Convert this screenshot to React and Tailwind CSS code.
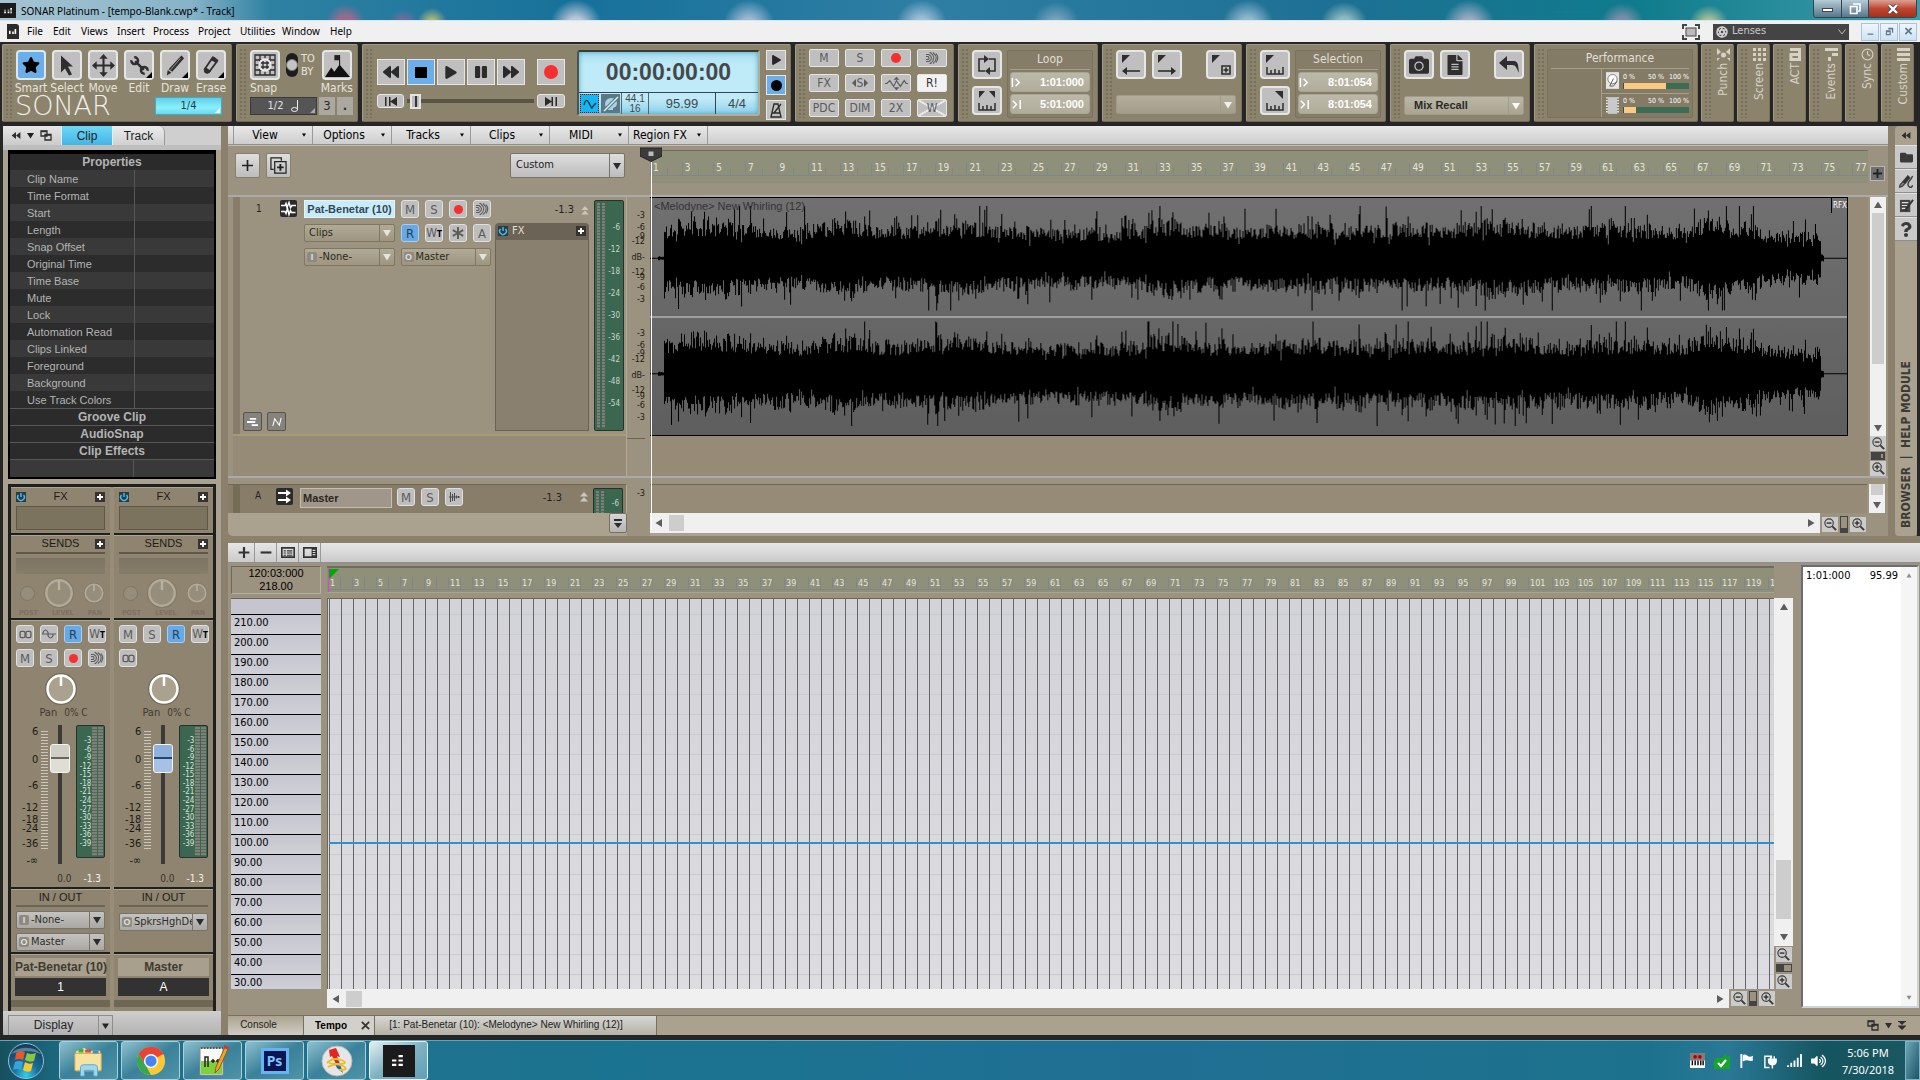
import React from "react";
import {
  FaStar, FaWrench, FaPencilAlt, FaCamera, FaFileAlt, FaFolder, FaQuestion,
  FaBackward, FaForward, FaPlay, FaPause, FaFlag, FaVolumeUp, FaAsterisk,
} from "react-icons/fa";
import { Aperture, Clock } from "lucide-react";

/* ---------- small shared pieces ---------- */

const Down = ({ className = "w-2 h-2" }) => (
  <svg viewBox="0 0 8 8" className={className} fill="currentColor" aria-hidden="true"><path d="M0 1h8L4 7.5z" /></svg>
);

function Select({ label, value, badge, className = "", arrow = "text-[#2c2c2c]", line = "border-[#77736a]" }) {
  return (
    <label className={`flex items-stretch overflow-hidden rounded-[2px] border ${line} ${className}`}>
      {badge && (
        <span className="my-auto ml-[2px] flex h-[10px] w-[10px] shrink-0 items-center justify-center rounded-[2px] bg-[#8d8a82] font-['Liberation_Sans',sans-serif] text-[9px] leading-none font-bold text-[#e4e2dc]">{badge}</span>
      )}
      <select aria-label={label} className={`min-w-0 flex-1 appearance-none overflow-hidden bg-transparent outline-none ${badge ? "pl-[2px]" : "pl-[4px]"}`}>
        <option>{value}</option>
      </select>
      <span className={`flex w-[15px] shrink-0 items-center justify-center border-l ${line} ${arrow}`}><Down className="h-[8px] w-[8px]" /></span>
    </label>
  );
}

const Sq = ({ label, on, children }) => (
  <button aria-label={label} className={`flex h-[18px] w-[18px] shrink-0 items-center justify-center rounded-[3px] border text-[13px] leading-none ${on ? "border-[#a9cdf2] bg-[#65a9e6] text-[#2b3e52]" : "border-[#e0e0e0] bg-[#bebebe] text-[#5c5c5c]"}`}>
    {children}
  </button>
);

const Dot = ({ className = "h-[9px] w-[9px]" }) => <span className={`rounded-full bg-[#f82f2f] ${className}`} />;

const Echo = () => (
  <svg viewBox="0 0 14 14" className="h-[14px] w-[14px]" fill="none" stroke="currentColor" strokeWidth="1.1">
    <path d="M1 5.500h2q2 1.500 0 3H1M1 3.500h3q5 3.500 0 7H1M4.500 1.500h1q6.500 5.500 0 11h-1M8 1.500q6.500 5.500 0 11M11 2.500q3.500 4.500 0 9" />
  </svg>
);
const Interleave = () => (
  <svg viewBox="0 0 14 10" className="h-[9px] w-[13px]" fill="none" stroke="currentColor" strokeWidth="1.500">
    <rect x="1" y="1.500" width="5.500" height="7" rx="1.500" /><rect x="7.500" y="1.500" width="5.500" height="7" rx="1.500" />
  </svg>
);
const Phase = () => (
  <svg viewBox="0 0 14 12" className="h-[12px] w-[14px]" fill="none" stroke="currentColor" strokeWidth="1.200">
    <path d="M0 6h14M1 6V4.500q2.500-5 5 0v3q2.500 5 5 0V6" />
  </svg>
);
const WriteT = () => (
  <span className="flex items-end text-[12px] leading-none">W<span className="text-[8px] leading-[9px] font-bold text-black">T</span></span>
);
const PlusBox = () => (
  <button aria-label="Add" className="flex h-[10px] w-[10px] items-center justify-center bg-[#35332f] text-white">
    <svg viewBox="0 0 10 10" className="h-[10px] w-[10px]" stroke="currentColor" strokeWidth="1.800"><path d="M5 2v6M2 5h6" /></svg>
  </button>
);
const Power = () => (
  <button aria-label="FX power" className="flex h-[10px] w-[10px] items-center justify-center bg-[#2c3a42] text-[#3fc0f0]">
    <svg viewBox="0 0 10 10" className="h-[10px] w-[10px]" fill="none" stroke="currentColor" strokeWidth="1.500"><path d="M2.500 3a3.300 3.300 0 1 0 5 0M5 1v4" /></svg>
  </button>
);
const Zoom = ({ plus }) => (
  <button aria-label={plus ? "Zoom in" : "Zoom out"} className="flex h-[15px] w-[16px] shrink-0 items-center justify-center bg-[#cbcbcb] text-[#3a3a3a]">
    <svg viewBox="0 0 16 16" className="h-[15px] w-[15px]" fill="none" stroke="currentColor">
      <circle cx="6.500" cy="6.500" r="4.500" strokeWidth="1.200" /><path d="M10 10l4 4" strokeWidth="2" /><path d={plus ? "M4 6.500h5M6.500 4v5" : "M4 6.500h5"} strokeWidth="1.600" />
    </svg>
  </button>
);
const Tri = ({ d, className = "h-[8px] w-[8px]" }) => (
  <svg viewBox="0 0 8 8" className={className} fill="#5d5d5d" aria-hidden="true"><path d={d} /></svg>
);
const UP = "M0 7L4 0.500 8 7z", DN = "M0 1h8L4 7.500z", LT = "M7 0v8L0.500 4z", RT = "M1 0v8l6.500-4z";

const Cascade = () => (
  <svg viewBox="0 0 12 11" className="h-[11px] w-[12px]" fill="none" stroke="#2e2e2e" strokeWidth="1.300"><path d="M1 1h6v5H1zM5 4.500h6v5.500H5z" /><path d="M1 1.500h6M5 5h6" /></svg>
);

/* ---------- title bar and menu ---------- */

function TitleBar() {
  return (
    <header className="flex h-[21px] items-center justify-between border-b border-[#d7e6ee] bg-[radial-gradient(circle_at_18%_120%,#b0688acc_0_8px,transparent_20px),radial-gradient(circle_at_21%_120%,#8a6a98aa_0_6px,transparent_15px),radial-gradient(circle_at_22.500%_115%,#c9c470cc_0_4px,transparent_15px),radial-gradient(circle_at_30%_130%,#e6dceacc_0_8px,transparent_26px),radial-gradient(circle_at_39%_130%,#d8d8ecaa_0_8px,transparent_26px),radial-gradient(circle_at_48%_130%,#d4dff0aa_0_8px,transparent_26px),radial-gradient(circle_at_55%_130%,#c3ccd888_0_6px,transparent_24px),radial-gradient(circle_at_65%_130%,#c9dcecaa_0_8px,transparent_26px),radial-gradient(circle_at_70%_130%,#c9e0d8aa_0_8px,transparent_24px),radial-gradient(circle_at_76.500%_130%,#c9bfd4bb_0_8px,transparent_26px),radial-gradient(ellipse_at_82%_60%,#7fa8c888_0_10px,transparent_70px),radial-gradient(circle_at_84.500%_125%,#a998b8aa_0_8px,transparent_22px),radial-gradient(circle_at_89%_125%,#c9cf9acc_0_6px,transparent_20px),linear-gradient(to_right,#a6c4d2,#86b3c8_10%,#2f81a2_14%,#16719a_30%,#2f7ea4_48%,#1d7094_70%,#0f7b8c_85%,#3f9cab)]">
      <div className="flex items-center gap-[5px]">
        <span className="flex h-[15px] w-[16px] items-center justify-center bg-[#1b1b1b] text-white"><svg viewBox="0 0 10 8" className="h-[7px] w-[9px]" fill="currentColor"><path d="M0 3h2v1H0zM0 5h2v2H0zM4 3h2v1H4zM4 5h2v2H4zM7 1h2v2H7zM7 4h2v1H7zM7 6h2v1H7z" /></svg></span>
        <h1 className="pt-[2px] font-['Noto_Sans',sans-serif] text-[10px] text-black">SONAR Platinum - [tempo-Blank.cwp* - Track]</h1>
      </div>
      <div className="mr-[3px] flex h-[18px] self-start overflow-hidden rounded-b-[4px] border border-t-0 border-[#33454f]">
        <button aria-label="Minimize" className="flex w-[28px] items-end justify-center border-r border-[#33454f] bg-linear-to-b from-[#b6cbd6] to-[#56788c] pb-[5px]"><span className="h-[4px] w-[11px] border border-[#444] bg-white" /></button>
        <button aria-label="Restore" className="flex w-[27px] items-center justify-center border-r border-[#33454f] bg-linear-to-b from-[#b6cbd6] to-[#56788c]"><svg viewBox="0 0 12 12" className="h-[12px] w-[12px]" fill="none" stroke="#fff" strokeWidth="1.600"><path d="M4 1h7v7H9M1.500 3.500h6.500v7H1.500z" /></svg></button>
        <button aria-label="Close" className="flex w-[47px] items-center justify-center bg-linear-to-b from-[#dca095] via-[#bf4630] to-[#a42f1c]"><svg viewBox="0 0 12 10" className="h-[10px] w-[12px]"><path d="M2 1l8 8M10 1L2 9" stroke="#4a4a52" strokeWidth="4" /><path d="M2 1l8 8M10 1L2 9" stroke="#fff" strokeWidth="2.400" /></svg></button>
      </div>
    </header>
  );
}

const MENU = [["File", "w-[26px]"], ["Edit", "w-[28px]"], ["Views", "w-[36px]"], ["Insert", "w-[36px]"], ["Process", "w-[45px]"], ["Project", "w-[42px]"], ["Utilities", "w-[42px]"], ["Window", "w-[48px]"], ["Help", "w-[30px]"]];

function MenuBar() {
  return (
    <nav className="flex h-[21px] items-center bg-[#f0f0f0] pr-[2px] pl-[7px] font-['Noto_Sans',sans-serif] text-[10px] text-black">
      <span className="mr-[8px] flex h-[15px] w-[12px] items-center justify-center rounded-tr-[3px] bg-[#2b2b2b] text-white"><svg viewBox="0 0 10 8" className="h-[7px] w-[8px]" fill="currentColor"><path d="M0 3h2v4H0zM4 4h2v3H4zM7 1h2v6H7z" /></svg></span>
      {MENU.map(([m, w]) => <button key={m} className={`${w} text-left`}>{m}</button>)}
      <div className="ml-auto flex items-center">
        <svg viewBox="0 0 18 16" className="mr-[13px] h-[16px] w-[18px]" fill="none" stroke="#444" strokeWidth="2"><path d="M1 5V1h4M13 1h4v4M17 11v4h-4M5 15H1v-4" /><rect x="4" y="4" width="10" height="8" fill="#bbb" strokeWidth="1" /></svg>
        <label className="mr-[12px] flex h-[16px] w-[136px] items-center bg-[#444] px-[3px] text-[#c9c9c9]">
          <Aperture className="h-[12px] w-[12px] text-[#d6d6d6]" strokeWidth={3} />
          <select aria-label="Lenses" className="ml-[4px] flex-1 appearance-none bg-transparent font-['DejaVu_Sans_Condensed',sans-serif] text-[11px] outline-none"><option>Lenses</option></select>
          <svg viewBox="0 0 8 6" className="h-[6px] w-[8px]" fill="none" stroke="#bbb"><path d="M0.500 0.500L4 5 7.500 0.500" /></svg>
        </label>
        {[["Minimize document", "M2 8h7v1.500H2z"], ["Restore document", "M4 1h6v6H8.500V3H4zM1 4h6v6H1zM2.500 6.500v2h3v-2z"], ["Close document", "M1 2l1.500-1.500L5.500 3.500 8.500.500 10 2 7 5l3 3-1.500 1.500-3-3-3 3L1 8l3-3z"]].map(([l, d]) => (
          <button key={l} aria-label={l} className="mr-[1px] flex h-[18px] w-[18px] items-center justify-center border border-[#a9c3dc] bg-linear-to-b from-[#eff6fc] to-[#cfe2f3]">
            <svg viewBox="0 0 11 11" className="h-[9px] w-[9px]" fill="#5f7890" fillRule="evenodd"><path d={d} /></svg>
          </button>
        ))}
      </div>
    </nav>
  );
}

/* ---------- control bar ---------- */

const Module = ({ className, children }) => (
  <section className={`flex h-[78px] shrink-0 rounded-[2px] border border-t-[#a39b86] border-r-[#7a725f] border-b-[#736b58] border-l-[#a39b86] bg-[#8c836d] ${className}`}>
    <div className="my-[3px] ml-[2px] w-[8px] shrink-0 bg-[radial-gradient(circle_at_2px_2px,#776f5c_1px,transparent_1px)] bg-[size:4px_4px]" />
    {children}
  </section>
);
const Big = ({ label, on, corner, children, h = "h-[30px]" }) => (
  <button aria-label={label} className={`relative flex ${h} w-[30px] shrink-0 items-center justify-center rounded-[4px] border-2 ${on ? "border-[#dce9f5] bg-[#6aaeea]" : "border-[#e6e6e6] bg-[#bfbfbf]"} text-[#2e2e2e]`}>
    {children}
    {corner && <svg viewBox="0 0 6 6" className="absolute right-0 bottom-0 h-[6px] w-[6px]"><path d="M6 0v6H0z" fill="#000" /></svg>}
  </button>
);
const TOOLS = [
  ["Smart", <FaStar className="h-[18px] w-[18px] text-black" />],
  ["Select", <svg viewBox="0 0 16 20" className="h-[21px] w-[16px]" fill="currentColor"><path d="M2 0l12 11H9l4 8-3 1-4-7-4 4z" /></svg>],
  ["Move", <svg viewBox="0 0 22 22" className="h-[23px] w-[23px]" fill="currentColor"><path d="M11 0l4 4.500h-3V10h5.500V7l4.500 4-4.500 4v-3H12v5.500h3L11 22l-4-4.500h3V12H4.500v3L0 11l4.500-4v3H10V4.500H7z" /></svg>],
  ["Edit", <svg viewBox="0 0 22 22" className="h-[21px] w-[21px]" fill="none" stroke="currentColor"><path d="M6.500 6.500l9 9" strokeWidth="2.600" /><path d="M2.500 5.500a3.500 3.500 0 1 0 3-3M19.500 16.500a3.500 3.500 0 1 0-3 3" strokeWidth="2.600" /></svg>],
  ["Draw", <svg viewBox="0 0 22 24" className="h-[23px] w-[20px]"><path d="M18 1l3 3L8 19l-4-3z" fill="currentColor" /><path d="M17 4L6 17" stroke="#999" /><path d="M3 17l4 3-5 3z" fill="currentColor" /></svg>],
  ["Erase", <svg viewBox="0 0 20 22" className="h-[21px] w-[18px]"><path d="M12 2l5 4L8 18l-5-3z" fill="none" stroke="currentColor" strokeWidth="2" /><path d="M4 13l6 4-3 3q-4 1-5-3z" fill="currentColor" /><path d="M13 1l5 4-3 3-5-3z" fill="currentColor" /></svg>],
];

const TB = "flex h-[26px] w-[28px] items-center justify-center border border-[#e6e6e6] text-[#2b2b2b]";

function Transport() {
  return (
    <Module className="w-[429px]">
      <div className="ml-[4px] w-[190px] pt-[14px]">
        <div className="flex gap-[2px]">
          <button aria-label="Rewind" className={`${TB} bg-[#bfbfbf]`}><FaBackward className="h-[16px] w-[18px]" /></button>
          <button aria-label="Stop" className={`${TB} bg-[#6aaeea]`}><span className="h-[11px] w-[12px] bg-black" /></button>
          <button aria-label="Play" className={`${TB} bg-[#bfbfbf]`}><FaPlay className="h-[13px] w-[12px]" /></button>
          <button aria-label="Pause" className={`${TB} bg-[#bfbfbf]`}><FaPause className="h-[14px] w-[12px]" /></button>
          <button aria-label="Fast forward" className={`${TB} bg-[#bfbfbf]`}><FaForward className="h-[16px] w-[18px]" /></button>
          <button aria-label="Record" className={`${TB} ml-[10px] bg-[#bfbfbf]`}><Dot className="h-[14px] w-[14px]" /></button>
        </div>
        <div className="mt-[9px] flex h-[14px] items-center">
          <button aria-label="Go to start" className="flex h-[14px] w-[27px] items-center justify-center rounded-[3px] border border-[#e6e6e6] bg-[#bfbfbf]"><svg viewBox="0 0 12 9" className="h-[9px] w-[12px]"><path d="M0 0h1.500v9H0zM4 0h1.500v9H4zM12 0v9L5 4.500z" fill="#2b2b2b" /></svg></button>
          <input type="range" aria-label="Position" defaultValue="3" className="mx-[3px] h-[14px] w-[127px] appearance-none bg-[linear-gradient(#5a5447,#5a5447)] bg-[size:100%_4px] bg-center bg-no-repeat [&::-webkit-slider-thumb]:h-[15px] [&::-webkit-slider-thumb]:w-[11px] [&::-webkit-slider-thumb]:appearance-none [&::-webkit-slider-thumb]:border-2 [&::-webkit-slider-thumb]:border-[#e4e4e4] [&::-webkit-slider-thumb]:bg-[linear-gradient(to_right,#bbb_3px,#333_3px_5px,#bbb_5px)]" />
          <button aria-label="Go to end" className="flex h-[14px] w-[28px] items-center justify-center rounded-[3px] border border-[#e6e6e6] bg-[#bfbfbf]"><svg viewBox="0 0 12 9" className="h-[9px] w-[12px]"><path d="M12 0h-1.500v9H12zM8 0H6.500v9H8zM0 0v9l7-4.500z" fill="#2b2b2b" /></svg></button>
        </div>
      </div>
      <div className="mt-[5px] ml-[10px] flex h-[66px] w-[183px] flex-col rounded-[3px] border-2 border-t-[#3c3a33] border-r-[#b5ad98] border-b-[#b5ad98] border-l-[#55524a] bg-[linear-gradient(#a9ddef,#bfeaf7_20%,#bfeaf7_75%,#8fd2ea)] font-['Liberation_Sans',sans-serif] text-[#45484b] shadow-[inset_0_0_5px_#3fa9cc]">
        <div className="flex h-[41px] items-center justify-center border-b border-[#345] text-[23px] font-bold">00:00:00:00</div>
        <div className="flex flex-1 items-stretch text-[13px]">
          <button aria-label="Audio engine" className="m-[1px] flex w-[19px] items-center justify-center border border-dotted border-[#0b2a35] bg-[#16b6f0]"><svg viewBox="0 0 14 12" className="h-[12px] w-[14px]" fill="none" stroke="#04303f" strokeWidth="1.300"><path d="M1 7q2-8 5-2t3 5 4-5" /></svg></button>
          <button aria-label="Panic" className="m-[1px] flex w-[19px] items-center justify-center bg-[#5a7886]"><svg viewBox="0 0 16 16" className="h-[16px] w-[16px]"><path d="M8 2a6 6 0 0 0-6 6q0 3 2 4v2h6v-2q4-1 4-5a6 6 0 0 0-6-5z" fill="#a9d3e2" /><path d="M1 15L15 1" stroke="#5a7886" strokeWidth="3.500" /><path d="M1 15L15 1" stroke="#d6f1f9" strokeWidth="1.500" /></svg></button>
          <span className="flex w-[28px] flex-col items-center justify-center border-x border-[#567] text-[10px] leading-[10px]"><span>44.1</span><span>16</span></span>
          <span className="flex flex-1 items-center justify-center border-r border-[#345]">95.99</span>
          <span className="flex w-[42px] items-center justify-center">4/4</span>
        </div>
      </div>
      <div className="ml-[6px] flex flex-col gap-[5px] pt-[5px]">
        <button aria-label="Play mode" className="flex h-[20px] w-[20px] items-center justify-center border border-[#e6e6e6] bg-[#bfbfbf]"><FaPlay className="h-[10px] w-[9px]" /></button>
        <button aria-label="Record mode" className="flex h-[20px] w-[20px] items-center justify-center border border-[#e6e6e6] bg-[#6aaeea]"><span className="h-[11px] w-[11px] rounded-full bg-black" /></button>
        <button aria-label="Metronome" className="flex h-[20px] w-[20px] items-center justify-center border border-[#e6e6e6] bg-[#bfbfbf]"><svg viewBox="0 0 14 16" className="h-[16px] w-[14px]" fill="none" stroke="#2b2b2b" strokeWidth="1.300"><path d="M2 15L5 2h4l3 13zM5 11l7-9M3 11h8" /></svg></button>
      </div>
    </Module>
  );
}

const MIX = [
  "M", "S", <Dot className="h-[10px] w-[10px]" />, <Echo />, "FX",
  <span className="flex items-center gap-[1px]"><svg viewBox="0 0 4 8" className="h-[8px] w-[4px]" fill="currentColor"><path d="M4 0v8L0 4z" /></svg>S<svg viewBox="0 0 4 8" className="h-[8px] w-[4px]" fill="currentColor"><path d="M0 0v8l4-4z" /></svg></span>,
  <svg viewBox="0 0 26 14" className="h-[15px] w-[25px]" fill="none" stroke="currentColor" strokeWidth="1.200"><path d="M1 7h2l3-3 4 6 3-6 4 6 4-6 2 3h2" /><path d="M13 0l3 3h-6zM13 14l3-3h-6z" fill="currentColor" stroke="none" /></svg>,
  "R!", "PDC", "DIM", "2X", "W",
];
const MIXN = ["Mute all", "Solo all", "Arm all", "Echo all", "FX bypass", "Exclusive solo", "Automation offset", "Read", "Delay compensation", "Dim solo", "Double sampling", "Write"];

const Range = ({ title, a, b, children }) => (
  <Module className="w-[140px]">
    <div className="ml-[3px] flex flex-col gap-[7px] pt-[5px]">{children}</div>
    <div className="mt-[5px] ml-[5px] flex h-[68px] w-[86px] flex-col items-stretch rounded-[2px] border border-[#7a725f] bg-[#867d68] px-[2px] text-center text-[12px] text-[#e2dfd6]">
      <h2 className="h-[19px] border-b border-[#a79f8b] leading-[17px]">{title}</h2>
      {[a, b].map((v, i) => (
        <label key={i} className="mt-[2px] flex h-[20px] items-center rounded-[3px] border border-[#a9a595] bg-linear-to-b from-[#bdb9a9] to-[#b1ad9b] pr-[5px]">
          <svg viewBox="0 0 12 12" className="h-[13px] w-[13px]" fill="none" stroke="#fff" strokeWidth="1.600"><path d={i ? "M2 2l4 4-4 4M10 1v10" : "M1.500 1v10M5 2l4 4-4 4"} /></svg>
          <input aria-label={`${title} ${i ? "end" : "start"}`} defaultValue={v} className="w-full min-w-0 bg-transparent text-right font-['Liberation_Sans',sans-serif] text-[11px] font-bold text-white outline-none" />
        </label>
      ))}
    </div>
  </Module>
);
const Comb = ({ top }) => (
  <svg viewBox="0 0 22 22" className="h-[22px] w-[22px]" fill="none" stroke="#2e2e2e" strokeWidth="1.500"><path d="M3 13v7h16v-7M7 16v4M11 15v5M15 16v4" /><path d={top} fill="#2e2e2e" stroke="none" /></svg>
);
const BigIcon = ({ d, f }) => (
  <svg viewBox="0 0 22 22" className="h-[22px] w-[22px]" fill="none" stroke="#2e2e2e" strokeWidth="1.600"><path d={d} />{f && <path d={f} fill="#2e2e2e" stroke="none" />}</svg>
);

const TABS = [
  ["Punch", <svg viewBox="0 0 13 13" className="h-[13px] w-[13px]" fill="currentColor"><path d="M0 0l4 4-4 3V0zM13 0L9 4l4 3zM0 13v-3h3zM13 13v-3h-3z" /><circle cx="6.500" cy="7" r="2.500" /></svg>],
  ["Screen", <svg viewBox="0 0 13 13" className="h-[13px] w-[13px]" fill="currentColor"><path d="M0 0h3v3H0zM5 0h3v3H5zM10 0h3v3h-3zM0 5h3v3H0zM5 5h3v3H5zM10 5h3v3h-3zM0 10h3v3H0zM5 10h3v3H5zM10 10h3v3h-3z" /></svg>],
  ["ACT", <svg viewBox="0 0 12 13" className="h-[13px] w-[12px]" fill="none" stroke="currentColor" strokeWidth="3"><path d="M1 1.500h9.500V13M10 6.500H2v5h8" /></svg>],
  ["Events", <svg viewBox="0 0 13 13" className="h-[13px] w-[13px]" fill="currentColor"><path d="M0 0h13v3H0zM3 9h3v4H3zM7 5h6v3H7z" /></svg>],
  ["Sync", <Clock className="h-[13px] w-[13px]" />],
  ["Custom", <svg viewBox="0 0 13 13" className="h-[13px] w-[13px]" fill="currentColor"><path d="M0 0h13v3H0zM0 5h13v3H0zM0 10h13v3H0z" /></svg>],
];

function ControlBar() {
  return (
    <div className="flex h-[84px] items-start gap-[4px] overflow-hidden bg-[#262626] px-[2px] pt-[2px] text-[#262626]">
      <Module className="w-[230px]">
        <div className="pt-[5px]">
          <div className="flex">
            {TOOLS.map(([n, icon], i) => (
              <div key={n} className="flex w-[36px] flex-col items-center text-[12px] leading-[16px] text-[#e6e3da]">
                <Big label={n} on={i === 0} corner={i > 2}>{icon}</Big>
                <span>{n}</span>
              </div>
            ))}
          </div>
          <div className="flex items-center justify-between pr-[7px] pl-[2px]">
            <span className="font-['DejaVu_Sans',sans-serif] text-[27px] leading-[20px] font-extralight text-[#f1efe9]">SONAR</span>
            <button className="relative h-[18px] w-[67px] border border-[#48a9c0] bg-[linear-gradient(#5ed0ea,#8ceefb_60%,#62dcf2)] text-[11px] text-[#1d3b44]">1/4<svg viewBox="0 0 6 6" className="absolute right-[1px] bottom-[1px] h-[5px] w-[5px]"><path d="M6 0v6H0z" fill="#fff" /></svg></button>
          </div>
        </div>
      </Module>
      <Module className="w-[122px]">
        <div className="ml-[3px] pt-[5px] text-[12px] text-[#e6e3da]">
          <div className="flex items-center">
            <Big label="Snap to grid"><svg viewBox="0 0 22 22" className="h-[22px] w-[22px]" fill="none" stroke="#2b2b2b" strokeWidth="1.300"><path d="M1 1h20v20H1zM6 1v20M16 1v20M1 6h20M1 16h20M1 11h4M17 11h4M11 1v4M11 17v4" /><circle cx="11" cy="11" r="6" fill="#d6d6d6" stroke="#f0f0f0" /><path d="M9 7v8M13 7v8M7 9h8M7 13h8" /></svg></Big>
            <button aria-label="Snap to or by" className="ml-[6px] h-[24px] w-[12px] rounded-full bg-[#1c1c1c]"><span className="block h-[12px] w-[12px] rounded-full border border-[#777] bg-[#c4c4c4]" /></button>
            <span className="ml-[3px] w-[21px] text-[11px] leading-[13px]"><span className="block">TO</span><span className="block">BY</span></span>
            <Big label="Marks"><svg viewBox="0 0 24 24" className="h-[25px] w-[25px]"><path d="M0 23l6-9 3 4 5-7 10 12z" fill="#111" /><path d="M14 13V2" stroke="#111" /><path d="M9 2h5v5H9z" fill="#222" /></svg></Big>
          </div>
          <div className="flex justify-between leading-[16px]"><span>Snap</span><span>Marks</span></div>
          <div className="mt-[1px] flex gap-[2px]">
            <button className="relative flex h-[18px] w-[67px] items-center justify-center gap-[8px] border border-[#3a3a3a] bg-[#555] text-[11px] text-[#e2e2e2]">1/2
              <svg viewBox="0 0 8 12" className="h-[12px] w-[8px]"><ellipse cx="3.500" cy="9.500" rx="3" ry="2" fill="none" stroke="#eee" /><path d="M6.500 0v9.500" stroke="#eee" /></svg>
              <svg viewBox="0 0 6 6" className="absolute right-[1px] bottom-[1px] h-[5px] w-[5px]"><path d="M6 0v6H0z" fill="#aaa" /></svg>
            </button>
            <button className="h-[18px] w-[16px] bg-[#aaa89f] text-[13px] leading-[18px] text-[#2e2e2e]">3</button>
            <button className="h-[18px] w-[16px] bg-[#aaa89f] text-[13px] leading-[16px] font-bold text-[#2e2e2e]">.</button>
          </div>
        </div>
      </Module>
      <Transport />
      <Module className="w-[159px]">
        <div className="ml-[3px] grid grid-cols-4 content-start gap-x-[6px] gap-y-[7px] pt-[4px] text-[12px] text-[#5b5b5b]">
          {MIX.map((m, i) => (
            <button key={i} aria-label={MIXN[i]} className={`flex h-[18px] w-[30px] items-center justify-center rounded-[2px] border border-[#e6e6e6] ${i === 7 ? "bg-[#f2f2f2] text-[#333]" : i === 11 ? "bg-[linear-gradient(to_top_right,transparent_46%,#e8e8e8_47%_53%,transparent_54%),linear-gradient(to_bottom_right,#bfbfbf_46%,#e8e8e8_47%_53%,#bfbfbf_54%)]" : "bg-[#bfbfbf]"}`}>{m}</button>
          ))}
        </div>
      </Module>
      <Range title="Loop" a="1:01:000" b="5:01:000">
        <Big h="h-[29px]" label="Loop on"><BigIcon d="M8 5H3v12h6M14 17h5V5h-6" f="M8 1v8l5-4zM14 13v8l-5-4z" /></Big>
        <Big h="h-[29px]" label="Set loop"><Comb top="M3 1h6L3 8zM19 1h-6l6 7z" /></Big>
      </Range>
      <Module className="w-[140px]">
        <div className="ml-[3px] flex flex-col justify-between pt-[5px] pb-[7px]">
          <div className="flex gap-[6px]">
            <Big h="h-[29px]" label="Previous marker"><BigIcon d="M4 17h16" f="M2 1h8L2 9zM7 13v8l-5-4z" /></Big>
            <Big h="h-[29px]" label="Next marker"><BigIcon d="M2 17h16" f="M2 1h8L2 9zM15 13v8l5-4z" /></Big>
            <span className="ml-auto"><Big h="h-[29px]" label="Insert marker"><BigIcon d="M12 12h8v8h-8zM16 13.500v5M13.500 16h5" f="M2 1h8L2 9z" /></Big></span>
          </div>
          <Select label="Marker" value="" className="h-[19px] w-[120px] bg-linear-to-b from-[#b3ae9c] to-[#a39e8c] text-[11px]" arrow="text-[#f2f0ea]" line="border-[#a19a86]" />
        </div>
      </Module>
      <Range title="Selection" a="8:01:054" b="8:01:054">
        <Big h="h-[29px]" label="Selection from"><Comb top="M2 1h8L2 9z" /></Big>
        <Big h="h-[29px]" label="Selection thru"><Comb top="M19 1h-8l8 8z" /></Big>
      </Range>
      <Module className="w-[140px]">
        <div className="ml-[3px] flex flex-col justify-between pt-[5px] pb-[6px]">
          <div className="flex gap-[6px]">
            <Big h="h-[29px]" label="Snapshot"><FaCamera className="h-[20px] w-[22px]" /></Big>
            <Big h="h-[29px]" label="Notes"><FaFileAlt className="h-[20px] w-[18px]" /></Big>
            <span className="ml-auto"><Big h="h-[29px]" label="Undo"><svg viewBox="0 0 20 18" className="h-[18px] w-[20px]"><path d="M8 0v5h7q3 0 4 4l1 8-3-6q-1-2-4-2H8v5L0 7z" fill="#2e2e2e" /></svg></Big></span>
          </div>
          <Select label="Mix Recall" value="Mix Recall" className="h-[19px] w-[120px] bg-linear-to-b from-[#bab6a6] to-[#aaa592] pl-[5px] font-['Liberation_Sans',sans-serif] text-[11px] font-bold text-[#2a2a2a]" arrow="text-[#fbfaf6]" line="border-[#a19a86]" />
        </div>
      </Module>
      <Module className="w-[164px]">
        <div className="mt-[4px] ml-[2px] flex h-[69px] w-[146px] flex-col rounded-[2px] border border-[#7a725f] bg-[#847b66] px-[3px]">
          <h2 className="h-[19px] border-b border-[#a79f8b] text-center text-[12px] leading-[17px] text-[#e2dfd6]">Performance</h2>
          <div className="flex flex-1">
            <div className="w-[51px] border-r border-[#a79f8b]" />
            <div className="flex flex-1 flex-col">
              {[["w-[65%]", 0], ["w-[18%]", 1]].map(([w, i]) => (
                <div key={w} className={`flex flex-1 items-center ${i ? "" : "border-b border-[#a79f8b]"}`}>
                  {i ? (
                    <svg viewBox="0 0 14 18" className="mx-[4px] h-[17px] w-[13px]" fill="#c9c9c9"><path d="M2 0h10v18H2z" /><path d="M1 0v18M13 0v18" stroke="#e8e8e8" strokeDasharray="1.500 1.500" strokeWidth="2" /></svg>
                  ) : (
                    <svg viewBox="0 0 14 18" className="mx-[4px] h-[17px] w-[13px]"><path d="M0 0h14v18H0z" fill="#e6e6e6" /><circle cx="7" cy="7.500" r="5" fill="#fff" stroke="#777" /><path d="M8 7l-4 8h4l4-5" fill="none" stroke="#555" /></svg>
                  )}
                  <div className="flex-1">
                    <div className="flex justify-between text-[7px] leading-[9px] text-white"><span>0 %</span><span className="ml-[8px]">50 %</span><span>100 %</span></div>
                    <div className="mt-[1px] h-[6px] border-l border-[#295a45] bg-[#3c6d54]"><div className={`${w} h-full bg-[#f9cb82]`} /></div>
                  </div>
                </div>
              ))}
            </div>
          </div>
        </div>
      </Module>
      <div className="-ml-[1px] flex flex-1 gap-[3px]">
        {TABS.map(([n, icon]) => (
          <Module key={n} className="w-[33px]">
            <button className="ml-[4px] flex flex-col items-center gap-[2px] pt-[3px] text-[12px] text-[#d6d2c6]">
              <span>{icon}</span>
              <span className="rotate-180 leading-[14px] [writing-mode:vertical-rl]">{n}</span>
            </button>
          </Module>
        ))}
      </div>
    </div>
  );
}

/* ---------- inspector ---------- */

const PROPS = ["Clip Name", "Time Format", "Start", "Length", "Snap Offset", "Original Time", "Time Base", "Mute", "Lock", "Automation Read", "Clips Linked", "Foreground", "Background", "Use Track Colors"];

const Knob = ({ size, dim }) => (
  <svg viewBox="0 0 34 34" className={size} aria-hidden="true">
    <circle cx="17" cy="17" r="16" fill="#6f6756" opacity={dim ? 0.3 : 0.9} />
    <circle cx="17" cy="17" r="13.500" fill={dim ? "#968d7a" : "#aaa28f"} stroke={dim ? "#b3ab9a" : "#fff"} strokeWidth="2.500" />
    <path d="M17 4v10" stroke={dim ? "#b9b2a2" : "#fff"} strokeWidth="2.500" />
  </svg>
);

const FADER = [["6", 28], ["0", 26], ["-6", 22], ["-12", 12], ["-18", 9], ["-24", 15], ["-36", 17], ["-∞", 10]];
const METER = [3, 6, 9, 12, 15, 18, 21, 24, 27, 30, 33, 36, 39];
const SEG = "bg-[repeating-linear-gradient(#7b8078_0_2px,#54695c_2px_3px)]";

function Strip({ name, num, bus }) {
  const head = "font-['Liberation_Sans',sans-serif] text-[11px] leading-[15px] text-[#1e1c18]";
  const sec = "border-t border-[#aca48f] bg-[#8e846f] px-[5px]";
  const sel = "h-[18px] w-full bg-linear-to-b from-[#c4c3bf] to-[#a9a8a4] text-[11px] text-[#2e2e2e]";
  return (
    <section className="flex min-w-0 flex-1 flex-col gap-[2px] bg-[#1f1f1f]">
      <div className={`${sec} h-[46px] pt-[1px]`}>
        <div className={`flex items-center justify-between ${head}`}><Power /><span>FX</span><PlusBox /></div>
        <div className="mt-[2px] h-[24px] border border-[#5f5848] bg-[#7c735f]" />
      </div>
      <div className={`${sec} h-[83px]`}>
        <div className={`flex items-center justify-between ${head}`}><span className="w-[10px]" /><span>SENDS</span><PlusBox /></div>
        <div className="mt-[1px] h-[2px] bg-[#5f5848]" />
        <div className="mt-[4px] h-[16px] rounded-[1px] bg-linear-to-b from-[#7d7463] to-[#857c69]" />
        <div className="mt-[3px] flex h-[32px] items-center justify-between">
          <span className="ml-[4px] h-[15px] w-[15px] rounded-full border border-[#7e7562] bg-[#968d7a]" />
          <Knob size="h-[32px] w-[32px]" dim /><Knob size="h-[22px] w-[22px]" dim />
        </div>
        <div className="flex justify-between px-[3px] text-[7px] leading-[8px] font-bold text-[#7b725f]"><span>POST</span><span>LEVEL</span><span>PAN</span></div>
      </div>
      <div className={`${sec} h-[267px] pt-[4px]`}>
        <div className="flex gap-[6px]">
          {bus ? <><Sq label="Mute">M</Sq><Sq label="Solo">S</Sq></> : <><Sq label="Interleave"><Interleave /></Sq><Sq label="Phase"><Phase /></Sq></>}
          <Sq label="Read" on>R</Sq><Sq label="Write"><WriteT /></Sq>
        </div>
        <div className="mt-[6px] flex gap-[6px]">
          {bus ? <Sq label="Interleave"><Interleave /></Sq> : <><Sq label="Mute">M</Sq><Sq label="Solo">S</Sq><Sq label="Arm"><Dot /></Sq><Sq label="Echo"><Echo /></Sq></>}
        </div>
        <div className="mt-[5px] flex justify-center"><Knob size="h-[34px] w-[34px]" /></div>
        <div className="flex justify-center gap-[7px] pl-[6px] text-[11px] leading-[13px] text-[#3f3b33]"><span>Pan</span><span className="text-[10px]">0% C</span></div>
        <div className="mt-[6px] flex h-[141px]">
          <div className="flex w-[23px] flex-col pt-[2px] text-right text-[11px] leading-[10px] text-[#1c1a16]">
            {FADER.map(([t, h]) => <span key={t} style={{ height: h }}>{t}</span>)}
          </div>
          <div className="mt-[6px] ml-[3px] h-[120px] w-[7px] bg-[repeating-linear-gradient(#c9c5ba_0_1px,transparent_1px_3px)]" />
          <input type="range" aria-label={`${name} volume`} defaultValue="83" className={`ml-[2px] h-[139px] w-[20px] appearance-none bg-[linear-gradient(#3c3a37,#3c3a37)] bg-[size:4px_100%] bg-center bg-no-repeat [direction:rtl] [writing-mode:vertical-lr] [&::-webkit-slider-thumb]:h-[29px] [&::-webkit-slider-thumb]:w-[20px] [&::-webkit-slider-thumb]:appearance-none [&::-webkit-slider-thumb]:rounded-[3px] [&::-webkit-slider-thumb]:border [&::-webkit-slider-thumb]:border-[#f4f4f0] ${bus ? "[&::-webkit-slider-thumb]:bg-[linear-gradient(#8fb2dd_12px,#23456e_12px_14px,#a5c2e4_14px)]" : "[&::-webkit-slider-thumb]:bg-[linear-gradient(#d0d0c6_12px,#66665e_12px_14px,#deded6_14px)]"}`} />
          <div className="ml-[6px] flex h-[133px] w-[29px] shrink-0 rounded-[2px] border border-[#26332c] bg-[#3b6750] p-[1px]">
            <div className="flex w-[14px] flex-col justify-between pt-[10px] pb-[8px] text-right text-[8px] leading-[8px] text-[#d9e2dc]">
              {METER.map((m) => <span key={m}>-{m}</span>)}
            </div>
            <div className={`ml-[1px] w-[5px] ${SEG}`} /><div className={`ml-[1px] w-[5px] ${SEG}`} />
          </div>
        </div>
        <div className="mt-[7px] flex justify-end gap-[12px] pr-[4px] text-[10px] leading-[12px]"><span className="text-[#3a362f]">0.0</span><span className="text-[#f4f1ea]">-1.3</span></div>
      </div>
      <div className={`${sec} h-[63px]`}>
        <div className={`text-center ${head}`}>IN / OUT</div>
        <div className="mb-[4px] h-[2px] bg-[#6a6454]" />
        {bus ? <div className="pt-[2px]"><Select label="Output" badge="O" value="SpkrsHghDef" className={sel} /></div> : (
          <div className="flex flex-col gap-[4px]"><Select label="Input" badge="I" value="-None-" className={sel} /><Select label="Output" badge="O" value="Master" className={sel} /></div>
        )}
      </div>
      <div className="flex flex-1 flex-col border-t border-[#aca48f] bg-[#8e846f] px-[4px] pt-[3px] font-['Liberation_Sans',sans-serif]">
        <div className="h-[18px] bg-[#a89f8c] text-center text-[12px] leading-[18px] font-bold whitespace-nowrap text-[#3f3b33]">{name}</div>
        <div className="mt-[2px] h-[18px] bg-[#323232] text-center text-[12px] leading-[18px] text-white">{num}</div>
        <div className="-mx-[4px] mt-[4px] h-[7px] bg-[#6f6653]" />
      </div>
    </section>
  );
}

function Inspector() {
  return (
    <aside className="flex w-[218px] shrink-0 flex-col bg-[#aaa290] font-['Liberation_Sans',sans-serif]">
      <div className="flex h-[19px] shrink-0 items-stretch rounded-tl-[4px] bg-[#cfcfcf] text-[12px] text-[#1f1f1f]">
        <div className="flex w-[58px] items-center gap-[6px] bg-linear-to-b from-[#e6e6e6] to-[#cbcbcb] pl-[8px]">
          <svg viewBox="0 0 10 8" className="h-[7px] w-[10px]"><path d="M5 0v8L0 4zM10 0v8L5 4z" fill="#2e2e2e" /></svg><Down className="h-[7px] w-[7px]" /><Cascade />
        </div>
        <button className="w-[52px] border-x border-[#d7f3fb] bg-linear-to-b from-[#6fd8f8] to-[#43b4e4]">Clip</button>
        <button className="w-[52px] rounded-tr-[6px] border-r border-[#999] bg-linear-to-b from-[#ececec] to-[#d0d0d0]">Track</button>
      </div>
      <div className="h-[5px] shrink-0 bg-[#bebebe]" />
      <div className="mx-[5px] shrink-0 border-2 border-t-4 border-black bg-[#2b2b2b] text-[#b4b4b4]">
        <table className="w-full border-collapse text-[11px]">
          <thead><tr><th colSpan={2} className="h-[16px] p-0 text-[12px] leading-[16px] font-bold">Properties</th></tr></thead>
          <tbody>
            {PROPS.map((p, i) => (
              <tr key={p} className={i % 2 ? "bg-[#2c2c2c]" : "bg-[#393939]"}>
                <td className="h-[17px] w-[124px] border-r border-[#575757] p-0 pt-[1px] pl-[17px] leading-[16px]">{p}</td><td />
              </tr>
            ))}
          </tbody>
        </table>
        {["Groove Clip", "AudioSnap", "Clip Effects"].map((g) => <div key={g} className="h-[17px] border-t border-[#575757] text-center text-[12px] leading-[16px] font-bold">{g}</div>)}
        <div className="h-[18px] border-t border-[#575757] bg-[#393939]"><div className="h-full w-[124px] border-r border-[#575757]" /></div>
      </div>
      <div className="mx-[5px] mt-[5px] flex flex-1 gap-[4px] border-x-[3px] border-t-[3px] border-[#1f1f1f] bg-[#978d78] font-['DejaVu_Sans_Condensed',sans-serif]">
        <Strip name="Pat-Benetar (10)" num="1" />
        <Strip name="Master" num="A" bus />
      </div>
      <div className="flex h-[24px] shrink-0 items-end rounded-b-[4px] bg-linear-to-b from-[#cfcfcf] to-[#b3b3b3] pl-[5px] text-[12px] text-[#262626]">
        <button className="flex h-[20px] border border-b-0 border-[#8d8d8d]"><span className="w-[89px] leading-[19px]">Display</span><span className="flex w-[14px] items-center justify-center self-stretch border-l border-[#8d8d8d]"><Down className="h-[8px] w-[7px]" /></span></button>
      </div>
    </aside>
  );
}

/* ---------- track view ---------- */

const CW = 1196;
const rnd = (n) => { const s = Math.sin(n * 12.9898) * 43758.5453; return s - Math.floor(s); };

function env(x) {
  if (x < 14) return x < 8 ? 0 : 0.06;
  if (x > 1172) return 0;
  if (x > 1169) return 0.12;
  const bumps = [[60, 60, 0.25], [195, 30, 0.22], [305, 45, 0.25], [520, 30, 0.25], [650, 60, 0.1], [760, 40, 0.1], [850, 40, 0.22], [960, 50, 0.15], [1058, 14, 0.4], [1090, 20, 0.15]];
  const e = bumps.reduce((s, [c, w, h]) => s + h * Math.exp(-(((x - c) / w) ** 2)), 0.9);
  return x > 1110 ? e * 0.86 : e;
}
function wave(mid, seed) {
  let d = "";
  for (let x = 0; x < CW; x++) {
    const e = env(x);
    const g = rnd(Math.floor(x / 5) + 5);
    const dip = rnd(x * 2.3 + 3) > 0.93 ? 6 : 0;
    const amp = (k) => {
      const r = rnd(x * 1.7 + k);
      const spike = rnd(x * 3.1 + 9 + Math.floor(k / 20)) > 0.9 ? 24 * rnd(x + k) : 0;
      return Math.min(52, e * (19 - dip + 12 * r + 7 * g * r + spike));
    };
    const up = e ? amp(1 + seed) : 0.5;
    const dn = e ? amp(40 + seed) : 0.5;
    d += `M${x}.5 ${(mid - up).toFixed(1)}V${(mid + dn).toFixed(1)}`;
  }
  return d;
}
const WAVE = wave(60, 0) + wave(175, 0.37);

const DB = [["-3", 12], ["-6", 9], ["-9", 5], ["-12", 16], ["dB-", 15], ["-12", 5], ["-9", 10], ["-6", 12], ["-3", 34], ["-3", 12], ["-6", 8], ["-9", 6], ["-12", 16], ["dB-", 15], ["-12", 6], ["-9", 9], ["-6", 12], ["-3", 10]];

const odd = (last) => Array.from({ length: (last + 1) / 2 }, (_, i) => 2 * i + 1);

function TrackRuler() {
  return (
    <div className="mt-[4px] flex h-[33px] flex-1 flex-col justify-end overflow-hidden border-t border-b border-t-[#6f6b60] border-b-[#8b8b90] bg-[#8e907a]">
      <div className="flex h-[13px] border-b border-[#84848c] text-[10px] leading-[10px] text-[#e6e4da]">
        {odd(77).map((n) => (
          <div key={n} className={`flex min-w-0 items-end ${n === 77 ? "flex-[1]" : "flex-[2]"}`}>
            <span className="h-[12px] min-w-0 flex-1 border-l border-[#84848c] pl-[2px]">{n}</span>
            {n < 77 && <span className="h-[7px] flex-1 border-l border-[#84848c]" />}
          </div>
        ))}
      </div>
      <div className="h-[6px]" />
    </div>
  );
}

const HScroll = ({ thumb }) => (
  <div className="flex h-[20px] min-w-0 flex-1 items-center bg-[#f0f0f0] px-[5px]">
    <Tri d={LT} /><span className={`ml-[6px] h-[16px] bg-[#cdcdcd] ${thumb}`} /><span className="ml-auto flex"><Tri d={RT} /></span>
  </div>
);

function TrackView() {
  const sel = "h-[18px] w-[91px] bg-linear-to-b from-[#b1aa97] to-[#9d9580] text-[11px] text-[#2c2922]";
  return (
    <section className="relative flex min-w-0 flex-1 flex-col rounded-b-[5px] bg-[#9c9280]">
      <nav className="flex h-[19px] border-b border-[#8f8f8f] bg-linear-to-b from-[#e9e9e9] to-[#cdcdcd] pl-[5px] text-[12px] text-black">
        {["View", "Options", "Tracks", "Clips", "MIDI", "Region FX"].map((m) => (
          <button key={m} className="flex w-[79px] items-center border-l border-[#9a9a9a] pr-[5px]"><span className="flex-1 pr-[5px] text-center whitespace-nowrap">{m}</span><Down className="h-[4px] w-[6px]" /></button>
        ))}
        <span className="border-l border-[#9a9a9a]" />
      </nav>
      <div className="flex h-[50px] border-t border-[#c5bda9]">
        <div className="flex w-[422px] shrink-0 items-start gap-[6px] pt-[7px] pl-[7px]">
          <button aria-label="Add track" className="flex h-[25px] w-[25px] items-center justify-center rounded-[2px] border border-[#85806f] bg-linear-to-b from-[#dedede] to-[#bdbdbd]"><svg viewBox="0 0 12 12" className="h-[11px] w-[11px]"><path d="M6 0v12M0 6h12" stroke="#222" strokeWidth="1.800" /></svg></button>
          <button aria-label="Duplicate track" className="flex h-[25px] w-[25px] items-center justify-center rounded-[2px] border border-[#85806f] bg-linear-to-b from-[#dedede] to-[#bdbdbd]"><svg viewBox="0 0 18 18" className="h-[17px] w-[17px]" fill="none" stroke="#222" strokeWidth="1.300"><path d="M4 13H1V1h11v3M5 5h12v12H5z" /><path d="M11 7.500v7M7.500 11h7" strokeWidth="2" /></svg></button>
          <Select label="Track preset" value="Custom" className="mr-[25px] ml-auto h-[25px] w-[115px] bg-linear-to-b from-[#dedede] to-[#bdbdbd] pl-[1px] text-[11px] text-[#1e1e1e]" />
        </div>
        <TrackRuler />
        <div className="flex w-[20px] items-end pb-[14px] pl-[2px]"><button aria-label="Ruler options" className="flex h-[15px] w-[15px] items-center justify-center border border-[#b5b5b5] bg-[#707070]"><svg viewBox="0 0 10 10" className="h-[9px] w-[9px]"><path d="M5 0v10M0 5h10" stroke="#222" strokeWidth="2" /></svg></button></div>
      </div>
      <div className="flex h-[283px] border-y-2 border-[#abaaa9]">
        <div className="flex w-[399px] shrink-0 flex-col border-r border-[#b5ab94] pl-[5px]">
          <div className="flex h-[239px] border-b-2 border-[#a59c74]">
            <div className="w-[7px] bg-[#877d6a]" />
            <div className="flex w-[64px] flex-col justify-between pt-[3px] pb-[3px]">
              <div className="flex items-center justify-between pr-[7px] pl-[16px] text-[10px] text-[#26231d]"><span>1</span>
                <svg viewBox="0 0 17 17" className="h-[17px] w-[17px]"><rect width="17" height="17" rx="2" fill="#2b2b2b" /><path d="M1 5.500h4l1-2 1 4 2-5 1.500 5 1.500-2h4M1 11.500h4l1 2 1.500-5 1.500 6 1.500-4 1 2h4" fill="none" stroke="#fff" strokeWidth="1.500" /></svg>
              </div>
              <div className="flex gap-[5px] pl-[3px]">
                <button aria-label="Take lanes" className="flex h-[19px] w-[19px] items-center justify-center rounded-[2px] border border-[#57534a] bg-[#85837d]"><svg viewBox="0 0 13 11" className="h-[10px] w-[12px]"><path d="M3 1h7v2H3zM0 4.500h9v2H0zM5 8h7v2H5z" fill="#fff" /></svg></button>
                <button aria-label="Automation lanes" className="flex h-[19px] w-[19px] items-center justify-center rounded-[2px] border border-[#57534a] bg-[#85837d]"><svg viewBox="0 0 13 13" className="h-[12px] w-[12px]" fill="none" stroke="#fff" strokeWidth="1.100"><path d="M2 11L4 3l5 7 2-8" /></svg></button>
              </div>
            </div>
            <div className="flex w-[187px] flex-col gap-[6px] pt-[3px]">
              <div className="flex gap-[6px]">
                <input aria-label="Track name" defaultValue="Pat-Benetar (10)" className="h-[18px] w-[91px] shrink-0 border border-[#e2f4fa] bg-[#c9ecf8] text-center font-['Liberation_Sans',sans-serif] text-[11px] font-bold text-[#33475a] outline-none" />
                <Sq label="Mute">M</Sq><Sq label="Solo">S</Sq><Sq label="Arm"><Dot /></Sq><Sq label="Echo"><Echo /></Sq>
              </div>
              <div className="flex gap-[6px]">
                <Select label="Edit filter" value="Clips" className={sel} arrow="text-[#e6e3da]" line="border-[#80775f]" />
                <Sq label="Read" on>R</Sq><Sq label="Write"><WriteT /></Sq><Sq label="Freeze"><FaAsterisk className="h-[12px] w-[12px]" /></Sq><Sq label="Archive">A</Sq>
              </div>
              <div className="flex gap-[6px]">
                <Select label="Input" badge="I" value="-None-" className={sel} arrow="text-[#e6e3da]" line="border-[#80775f]" />
                <Select label="Output" badge="O" value="Master" className={sel} arrow="text-[#e6e3da]" line="border-[#80775f]" />
              </div>
            </div>
            <div className="ml-[4px] flex w-[94px] flex-col pb-[3px]">
              <div className="flex h-[26px] items-center justify-end gap-[7px] text-[11px] text-[#26231d]"><span>-1.3</span><svg viewBox="0 0 8 10" className="h-[9px] w-[8px]" fill="#cbc6ba"><path d="M4 0l4 4.500H0zM4 5l4 4.500H0z" /></svg></div>
              <div className="flex h-[16px] items-center rounded-t-[4px] bg-[#6b6355] px-[3px] text-[11px] text-[#e2dfd6]"><Power /><span className="ml-[4px] flex-1">FX</span><PlusBox /></div>
              <div className="flex-1 border border-[#6b6355] bg-[#898070]" />
            </div>
            <div className="mt-[3px] mb-[3px] ml-[5px] flex w-[30px] rounded-[2px] border border-[#26332c] bg-[#3b6750] py-[2px] pl-[2px]">
              <div className={`w-[3px] ${SEG}`} /><div className={`ml-[2px] w-[3px] ${SEG}`} />
              <div className="flex flex-1 flex-col justify-between pt-[20px] pr-[3px] pb-[19px] text-right text-[8px] leading-[10px] text-[#c9d6cd]">{[6, 12, 18, 24, 30, 36, 42, 48, 54].map((n) => <span key={n}>-{n}</span>)}</div>
            </div>
          </div>
          <div className="flex-1 bg-[#958b76]" />
        </div>
        <div className="flex w-[23px] shrink-0 flex-col pt-[13px] pr-[5px] text-right text-[9px] leading-[10px] text-[#1f1c17]">
          {DB.map(([t, h], i) => <span key={i} style={{ height: h }}>{t}</span>)}
          <div className="mt-[16px] border-t border-[#6c6454]" />
        </div>
        <div className="min-w-0 flex-1 bg-[#958b76]">
          <div className="relative mr-[20px] h-[239px] border-y border-r border-t-black border-r-black border-b-black bg-linear-to-b from-[#707070] to-[#5e5e5e]">
            <svg viewBox="0 0 1196 236" preserveAspectRatio="none" className="h-full w-full" aria-label="Waveform"><path d={WAVE} stroke="#000" strokeWidth="1" /><path d="M0 118.500h1196" stroke="#d8d8d8" /></svg>
            <span className="absolute top-[2px] left-[4px] font-['Liberation_Sans',sans-serif] text-[11px] leading-[13px] text-[#333]">&lt;Melodyne&gt; New Whirling (12)</span>
            <span className="absolute top-0 right-0 border-l border-black pl-[1px] text-[8px] leading-[15px] text-white">RFX</span>
          </div>
        </div>
        <div className="ml-[2px] flex w-[16px] shrink-0 flex-col items-center">
          <div className="flex w-full flex-1 flex-col items-center bg-[#f0f0f0] py-[4px]"><Tri d={UP} /><span className="mt-[4px] h-[151px] w-[12px] bg-[#cdcdcd]" /><span className="mt-auto"><Tri d={DN} /></span></div>
          <Zoom /><div className="my-[1px] h-[8px] w-[14px] border-2 border-[#444] bg-[linear-gradient(to_right,#444_80%,#9c9280_80%)]" /><Zoom plus />
        </div>
        <div className="w-[2px] shrink-0" />
      </div>
      <div className="flex h-[35px] overflow-hidden pt-[6px]">
        <div className="flex w-[399px] shrink-0 border-t border-r border-t-[#6f6653] border-r-[#b5ab94] bg-[#877d69] pl-[5px]">
          <div className="w-[7px] bg-[#766d57]" />
          <div className="flex w-[60px] shrink-0 items-start justify-between pt-[3px] pr-[7px] pl-[15px] text-[10px] text-[#26231d]"><span>A</span>
            <svg viewBox="0 0 17 17" className="h-[17px] w-[17px]"><rect width="17" height="17" rx="2" fill="#2b2b2b" /><path d="M2 5h8M2 12h8" stroke="#fff" strokeWidth="2" /><path d="M10 1.500l5 3.500-5 3.500zM10 8.500l5 3.500-5 3.500z" fill="#fff" /></svg>
          </div>
          <input aria-label="Bus name" defaultValue="Master" className="mt-[3px] h-[20px] w-[92px] shrink-0 border border-[#c5bfae] bg-[#a0978a] pl-[2px] font-['Liberation_Sans',sans-serif] text-[11px] font-bold text-[#2b2822] outline-none" />
          <div className="mt-[3px] flex gap-[6px] pl-[5px]"><Sq label="Mute">M</Sq><Sq label="Solo">S</Sq><Sq label="Waveform preview"><svg viewBox="0 0 12 12" className="h-[12px] w-[12px]" stroke="#4a4a4a"><path d="M1 6h11M2.500 1v10M4.500 3v7M6.500 2v8M8.500 4.500v3M10.500 5v2" /></svg></Sq></div>
          <div className="ml-auto flex w-[94px] items-start justify-end gap-[18px] pt-[5px] text-[11px] text-[#26231d]"><span>-1.3</span><svg viewBox="0 0 8 10" className="mt-[2px] h-[10px] w-[8px]" fill="#cbc6ba"><path d="M4 0l4 4.500H0zM4 5l4 4.500H0z" /></svg></div>
          <div className="mt-[3px] mr-[3px] ml-[5px] flex w-[30px] shrink-0 rounded-t-[2px] border border-b-0 border-[#26332c] bg-[#3b6750] pt-[2px] pl-[2px]">
            <div className={`w-[3px] ${SEG}`} /><div className={`ml-[2px] w-[3px] ${SEG}`} />
            <div className="flex-1 pt-[8px] pr-[3px] text-right text-[8px] leading-[10px] text-[#c9d6cd]">-6</div>
          </div>
        </div>
        <div className="w-[23px] shrink-0 pt-[4px] pr-[5px] text-right text-[9px] leading-[10px] text-[#1f1c17]">-3</div>
        <div className="flex-1 border-t border-[#6f6653] bg-[#958b76]" />
        <div className="ml-[2px] flex w-[16px] shrink-0 flex-col items-center justify-between bg-[#f0f0f0] pb-[4px]"><span className="h-[11px] w-[12px] bg-[#cdcdcd]" /><Tri d={DN} /></div>
        <div className="w-[3px] shrink-0" />
      </div>
      <div className="flex h-[23px] rounded-b-[5px] bg-[#aaa18f]">
        <div className="flex w-[399px] shrink-0 items-start justify-end"><button aria-label="Show buses" className="flex h-[20px] w-[18px] items-center justify-center rounded-[2px] border border-[#77705f] bg-linear-to-b from-[#d6d6d6] to-[#b5b5b5]"><svg viewBox="0 0 8 9" className="h-[9px] w-[8px]"><path d="M0 0h8v2H0zM0 4h8L4 9z" fill="#2c2c2c" /></svg></button></div>
        <div className="w-[23px] shrink-0 bg-[#9c9280]" />
        <HScroll thumb="w-[15px]" />
        <div className="flex items-center gap-[2px] bg-[#9c9280] pr-[22px] pl-[2px]"><Zoom /><div className="flex h-[17px] w-[8px] items-end border border-[#444]"><span className="h-[4px] w-full bg-[#444]" /></div><Zoom plus /></div>
      </div>
      <div className="pointer-events-none absolute top-[21px] left-[412px] flex h-[383px] w-[22px] flex-col items-center">
        <svg viewBox="0 0 22 15" className="h-[15px] w-[22px] shrink-0"><path d="M0 1h22v8l-11 5.500L0 9z" fill="#3c3c3c" stroke="#222" /><path d="M8.500 4.500h5v4.500h-5z" fill="#bbb" /></svg>
        <span className="w-px flex-1 bg-white" />
      </div>
    </section>
  );
}

function BrowserStrip() {
  const icons = [<FaFolder className="h-[13px] w-[15px]" />,
    <svg viewBox="0 0 16 16" className="h-[15px] w-[16px]" fill="none" stroke="#3a3a3a"><path d="M1 14q0-3 3-5l6-7 2 2-6 7q-2 3-5 3z" strokeWidth="1.300" fill="#8a8a8a" /><path d="M5 9l5-7 2 2-5 6z" fill="#333" /><path d="M15 2q-1 3-3 5t-2 4 2 3 3-2" strokeWidth="1.500" /></svg>,
    <svg viewBox="0 0 16 16" className="h-[15px] w-[15px]"><path d="M1 2h11v13H1z" fill="#444" /><path d="M3 5h7M3 8h6M3 11h4" stroke="#ddd" strokeWidth="1.300" /><path d="M15 2l-7 9-1 3" stroke="#333" strokeWidth="2" fill="none" /></svg>,
    <FaQuestion className="h-[15px] w-[14px]" />];
  const names = ["Media", "Plug-ins", "Notes", "Help"];
  return (
    <aside className="flex w-[22px] shrink-0 flex-col rounded-[4px] bg-[#aaa18f] text-[#3a3a3a]">
      <button aria-label="Collapse browser" className="flex h-[19px] items-center justify-center"><svg viewBox="0 0 10 8" className="h-[7px] w-[10px]"><path d="M5 0v8L0 4zM10 0v8L5 4z" fill="#2e2e2e" /></svg></button>
      {icons.map((ic, i) => <button key={i} aria-label={names[i]} className="flex h-[24px] items-center justify-center border-t border-b border-t-[#e2e2e2] border-b-[#8f8f8f] bg-[#c9c9c9]">{ic}</button>)}
      <div className="mt-auto flex justify-center pb-[8px]"><span className="rotate-180 text-[12px] leading-[20px] font-bold whitespace-nowrap text-[#3c3a36] [writing-mode:vertical-rl]">BROWSER&nbsp; |&nbsp; HELP MODULE</span></div>
    </aside>
  );
}

/* ---------- tempo view ---------- */

const TEMPOS = Array.from({ length: 19 }, (_, i) => `${210 - i * 10}.00`);

function TempoView() {
  return (
    <section className="flex min-h-0 flex-1 flex-col bg-[#9c9280]">
      <div className="flex h-[20px] shrink-0 items-stretch border-b border-[#8f8f8f] bg-linear-to-b from-[#e6e6e6] to-[#cbcbcb] pl-[5px]">
        {[["Insert tempo", "M5.500 1h2v4h4v2h-4v4h-2V7h-4V5h4z"], ["Delete tempo", "M1.500 5h10v2h-10z"], ["Tempo list", "M0 1h13v10H0zM1.500 2.500v7h10v-7zM2.500 4h2v1h-2zM5.500 4h5v1h-5zM2.500 6h2v1h-2zM5.500 6h5v1h-5zM2.500 8h2v1h-2zM5.500 8h5v1h-5z"], ["List pane", "M0 1h13v10H0zM1.500 2.500v7H8v-7zM9 3.500h2.500v1H9zM9 5.500h2.500v1H9zM9 7.500h2.500v1H9z"]].map(([l, d]) => (
          <button key={l} aria-label={l} className="flex w-[22px] items-center justify-center border-r border-[#999]"><svg viewBox="0 0 13 12" className="h-[13px] w-[14px]" fill="#333" fillRule="evenodd"><path d={d} /></svg></button>
        ))}
      </div>
      <div className="flex min-h-0 flex-1">
        <div className="flex w-[93px] shrink-0 flex-col pl-[3px] text-black">
          <div className="mt-[3px] flex h-[28px] shrink-0 flex-col items-center border border-t-[#6f6653] border-r-[#b9b19e] border-b-[#b9b19e] border-l-[#6f6653] font-['Liberation_Sans',sans-serif] text-[11px] leading-[13px]"><span>120:03:000</span><span>218.00</span></div>
          <div className="mt-[4px] flex min-h-0 flex-1 flex-col overflow-hidden border-t border-[#6f6653] bg-[#c5c5cf] text-[11px]">
            <div className="h-[16px] shrink-0 border-b border-black" />
            {TEMPOS.map((t, i) => <div key={t} className={`${i === 18 ? "h-[14px]" : "h-[20px] border-b"} shrink-0 border-black bg-linear-to-b from-[#c6c6d0] to-[#d0d0d8] pl-[3px] leading-[15px]`}>{t}</div>)}
          </div>
          <div className="h-[26px] shrink-0" />
        </div>
        <div className="ml-[6px] flex min-w-0 flex-1 flex-col">
          <div className="relative mt-[3px] flex h-[27px] shrink-0 flex-col justify-end overflow-hidden border-t-2 border-b border-t-[#6f6b60] border-b-[#a9a28f] bg-[#8e907a] pl-[1px]">
            <svg viewBox="0 0 10 10" className="absolute top-[1px] left-[2px] h-[10px] w-[10px]"><path d="M0 0h10L0 10z" fill="#00a800" /></svg>
            <span className="absolute top-0 bottom-0 left-[1px] w-px bg-[#e23be2]" />
            <div className="flex h-[13px] border-b border-[#84848c] text-[9px] leading-[13px] text-[#e6e4da]">
              {odd(121).map((n) => <div key={n} className="flex w-[24px] shrink-0 items-end"><span className="h-[12px] w-[12px] border-l border-[#84848c] pl-[1px]">{n}</span><span className="h-[12px] w-[12px] bg-[linear-gradient(#84848c,#84848c)] bg-[size:1px_100%] bg-no-repeat" hidden={n > 99} /></div>)}
            </div>
            <div className="h-[2px]" />
          </div>
          <div className="relative mt-[5px] min-h-0 flex-1 border-t border-l border-[#6f6653] bg-[repeating-linear-gradient(to_right,transparent_0_1px,#666_1px_2px,transparent_2px_12px),repeating-linear-gradient(to_bottom,transparent_0_15px,#cacacf_15px_16px,transparent_16px_20px),linear-gradient(#d2d2d9,#dddde1)]">
            <span className="absolute top-[243px] right-0 left-[1px] h-[2px] bg-[#2b93cf]" />
          </div>
          <div className="-mr-[1px] flex h-[19px] shrink-0 items-center overflow-hidden"><HScroll thumb="w-[16px]" /><div className="flex items-center gap-[2px] pl-[2px]"><Zoom /><div className="flex h-[15px] w-[8px] items-end border border-[#444]"><span className="h-[4px] w-full bg-[#444]" /></div><Zoom plus /></div></div>
          <div className="h-[7px] shrink-0" />
        </div>
        <div className="mt-[35px] mb-[26px] flex w-[19px] shrink-0 flex-col items-center">
          <div className="flex w-full flex-1 flex-col items-center bg-[#f0f0f0] py-[5px]"><Tri d={UP} /><span className="mt-auto mb-[14px] h-[59px] w-[15px] bg-[#cdcdcd]" /><Tri d={DN} /></div>
          <div className="mt-[1px] flex flex-col items-center"><Zoom /><div className="my-[2px] h-[8px] w-[16px] border border-[#444] bg-[linear-gradient(to_right,#444_50%,#9c9280_50%)]" /><Zoom plus /></div>
        </div>
        <div className="mt-[2px] mr-[1px] mb-[7px] ml-[8px] flex w-[118px] shrink-0 justify-between border-2 border-t-[#6c6c72] border-r-[#cfd3d8] border-b-[#cfd3d8] border-l-[#6c6c72] bg-white">
          <table className="m-0 w-[95px] self-start text-[11px] text-black"><tbody><tr><td className="p-0 pt-[1px] pl-[3px]">1:01:000</td><td className="p-0 text-right">95.99</td></tr></tbody></table>
          <div className="flex w-[16px] flex-col items-center justify-between bg-[#f1f1f1] py-[6px] opacity-70"><Tri d={UP} className="h-[5px] w-[6px]" /><Tri d={DN} className="h-[5px] w-[6px]" /></div>
        </div>
      </div>
      <div className="flex h-[20px] shrink-0 items-stretch border-t border-[#77705f] bg-[#aaa18f] font-['Liberation_Sans',sans-serif] text-[10px] leading-[17px] text-[#222]">
        <button className="w-[76px] rounded-b-[2px] border-r border-[#77705f] bg-linear-to-b from-[#aca38f] to-[#d0cdc4] pr-[14px] pb-[2px]">Console</button>
        <button className="flex w-[70px] items-center justify-between bg-[#d2d0cb] pr-[4px] pb-[1px] pl-[11px] font-bold text-black">Tempo<svg viewBox="0 0 10 10" className="h-[9px] w-[9px]"><path d="M1 1l8 8M9 1L1 9" stroke="#333" strokeWidth="2" /></svg></button>
        <button className="w-[283px] border-x border-[#77705f] bg-linear-to-b from-[#d6d6d4] to-[#b5b2a6] pr-[19px] pb-[2px] whitespace-nowrap">[1: Pat-Benetar (10): &lt;Melodyne&gt; New Whirling (12)]</button>
        <div className="ml-auto flex items-center gap-[6px] pr-[14px] text-[#2e2e2e]"><Cascade /><Down className="h-[7px] w-[7px]" /><svg viewBox="0 0 8 9" className="h-[9px] w-[8px]"><path d="M0 0h8L4 4zM0 5h8L4 9zM0 0h8v1H0zM0 4.500h8v1H0z" fill="#2e2e2e" /></svg></div>
      </div>
    </section>
  );
}

/* ---------- taskbar ---------- */

const APPS = [
  ["Explorer", <svg viewBox="0 0 34 34" className="h-[32px] w-[34px]"><path d="M3 7l9-4 4 3h13v22H3z" fill="#f4d987" /><path d="M2 9h28v18H2z" fill="#f7e3a1" stroke="#d0ac52" /><path d="M6 4h5v4H6z" fill="#49a84f" /><path d="M13 5h6v3h-6z" fill="#d34b41" /><path d="M21 6h6v3h-6z" fill="#3f8fd0" /><path d="M8 33v-9q0-3 3-3h12q3 0 3 3v9h-4v-6H12v6z" fill="#9fd8f0" stroke="#5aa7cc" /></svg>],
  ["Chrome", <svg viewBox="0 0 32 32" className="h-[30px] w-[30px]"><circle cx="16" cy="16" r="15" fill="#fcc934" /><path d="M16 16L3 8.500A15 15 0 0 1 29 8.500z" fill="#ea4335" /><path d="M3 8.500L10 20l6 11A15 15 0 0 1 3 8.500z" fill="#34a853" /><path d="M16 8.500h13L28 7A15 15 0 0 0 3 8.500L9.500 19z" fill="#ea4335" /><circle cx="16" cy="16" r="7.500" fill="#fff" /><circle cx="16" cy="16" r="6" fill="#4285f4" /></svg>],
  ["Notepad++", <svg viewBox="0 0 32 34" className="h-[34px] w-[32px]"><path d="M3 4h23v27H3z" fill="#f8f8f6" stroke="#888" /><path d="M4 17h21v13H4z" fill="#7ed03c" /><path d="M4 4h22" stroke="#555" strokeWidth="2" strokeDasharray="1.500 1.500" /><path d="M8 23V13h3v10M14 17h4M16 15v4M19 17h4M21 15v4" fill="none" stroke="#222" strokeWidth="1.500" /><path d="M28 3l3 2-9 20-4 4 1-6z" fill="#f0a52e" stroke="#9a5a18" /><path d="M27 1l5 2-1 3-4-2z" fill="#c43d3d" /></svg>],
  ["Photoshop", <span className="flex h-[26px] w-[28px] items-center justify-center border-[3px] border-[#64b4f5] bg-[#0b1550] font-['Noto_Sans',sans-serif] text-[14px] leading-none font-bold text-[#7cc4ff]">Ps</span>],
  ["Paint.NET", <svg viewBox="0 0 32 32" className="h-[32px] w-[32px]"><ellipse cx="16" cy="16" rx="15" ry="15" fill="#e6e6e6" stroke="#b9b9b9" /><path d="M15 3l4 9-3-1 2 6-3 2-4-8-2 1-1-7z" fill="#e22525" /><path d="M14 19l4-3 4 12-6-5z" fill="#2a5fc0" /><path d="M6 18q6-6 14-3t0 4q-8 0-12-1M7 22q8-5 15-1t-4 4" fill="none" stroke="#eebd1c" strokeWidth="1.800" /></svg>],
  ["SONAR", <span className="flex h-[32px] w-[32px] items-center justify-center bg-[#1b1b1b]"><svg viewBox="0 0 12 12" className="h-[13px] w-[13px]" fill="#fff"><path d="M0 5h4v2H0zM0 9h4v2H0zM6 1h4v2H6zM6 5h4v2H6zM6 9h4v2H6z" /></svg></span>],
];

function Taskbar() {
  return (
    <footer className="flex h-[40px] shrink-0 items-stretch border-t border-[#5fa6ba] bg-[linear-gradient(to_right,#17505f,#1e6f88_4%,#1e7390_23%,#1a7390_32%,#206f93_60%,#1c728c_86%,#2a7896_90%,#155560_95%,#1a5762)] pl-[7px]">
      <button aria-label="Start" className="mr-[14px] flex items-center">
        <svg viewBox="0 0 38 38" className="h-[38px] w-[38px]"><defs><radialGradient id="orb" cx="50%" cy="90%" r="90%"><stop offset="0" stopColor="#2fd0f0" /><stop offset=".4" stopColor="#1a6c96" /><stop offset="1" stopColor="#153a55" /></radialGradient></defs><circle cx="19" cy="19" r="17.500" fill="url(#orb)" stroke="#8fc3d8" /><path d="M9 11q4-3 9-1l-2 8q-4-2-8 0z" fill="#e8572a" /><path d="M20 11q4 2 9 0l-2 8q-4 2-9-1z" fill="#8cc63f" /><path d="M8 20q4-2 8 0l-2 8q-4-2-8 0z" fill="#38a4dc" /><path d="M18 20q4 3 8 1l-2 8q-4 2-8-1z" fill="#fdc82f" /><path d="M4 12a17 12 0 0 1 30 0q-15-6-30 0" fill="#fff" opacity=".3" /></svg>
      </button>
      <div className="flex gap-[3px]">
        {APPS.map(([n, icon], i) => (
          <button key={n} aria-label={n} className={`flex w-[59px] items-center justify-center rounded-[3px] border ${i === 5 ? "border-[#e2f2f6] bg-[linear-gradient(to_bottom_right,#e2eff3,#7fb2c2_50%,#5f9fb5)]" : "border-[#a9d0dc] bg-[linear-gradient(to_bottom_right,#8fc0cf,#3a8199_50%,#4f94a8)]"}`}>{icon}</button>
        ))}
      </div>
      <div className="ml-auto flex items-center gap-[9px] font-['Noto_Sans',sans-serif] text-[11px] text-white">
        <svg viewBox="0 0 16 16" className="h-[15px] w-[15px]"><path d="M0 0h16v16H0z" fill="#8a7a7a" /><circle cx="5.500" cy="4" r="2" fill="#b00000" /><circle cx="10.500" cy="4" r="2" fill="#b00000" /><path d="M0 8h16v8H0z" fill="#fff" /><path d="M2.500 8v5M5.500 8v5M8.500 8v5M11.500 8v5M14 8v5" stroke="#000" strokeWidth="1.500" /></svg>
        <svg viewBox="0 0 16 16" className="h-[16px] w-[16px]"><path d="M0 8l3-3h5l4-5v4l4-1v13H0z" fill="#15a52a" /><path d="M4 10l3 3 5-6" stroke="#fff" strokeWidth="2.200" fill="none" /></svg>
        <svg viewBox="0 0 16 16" className="h-[15px] w-[15px]"><path d="M2.500 1v15" stroke="#fff" strokeWidth="2" /><path d="M4 2q3-1 5 1t6 0q-1 3 0 5-3 1-5 0T4 9z" fill="#fff" /></svg>
        <svg viewBox="0 0 16 16" className="h-[16px] w-[15px]" fill="none" stroke="#fff" strokeWidth="1.500"><path d="M7 15H2V3h7v2" /><path d="M6 6h8v3q-1 3-4 3t-4-3zM8 3v3M12 3v3M10 12v4" fill="#fff" /></svg>
        <svg viewBox="0 0 16 14" className="h-[13px] w-[15px]" fill="#fff"><path d="M0 12h2v2H0zM3.500 9.500h2V14h-2zM7 7h2v7H7zM10.500 4h2v10h-2zM14 0h2v14h-2z" /></svg>
        <FaVolumeUp className="h-[14px] w-[15px]" />
        <div className="ml-[5px] w-[56px] text-center leading-[17px]"><div>5:06 PM</div><div>7/30/2018</div></div>
        <button aria-label="Show desktop" className="h-full w-[15px] border border-[#7fb4c4] bg-linear-to-br from-[#6fa7b8] to-[#1a5566]" />
      </div>
    </footer>
  );
}

export default function App() {
  return (
    <div className="flex h-screen min-h-[1080px] w-full flex-col overflow-hidden bg-[#262626] font-['DejaVu_Sans_Condensed','DejaVu_Sans',sans-serif]">
      <TitleBar />
      <MenuBar />
      <ControlBar />
      <main className="mb-[5px] ml-[3px] flex min-h-0 flex-1 bg-[#8a806b]">
        <Inspector />
        <div className="ml-[7px] flex min-w-0 flex-1 flex-col">
          <div className="flex h-[410px] shrink-0 border-r-[3px] border-[#262626]">
            <TrackView />
            <div className="w-[7px] shrink-0" />
            <BrowserStrip />
          </div>
          <div className="h-[7px] shrink-0" />
          <TempoView />
        </div>
      </main>
      <Taskbar />
    </div>
  );
}
